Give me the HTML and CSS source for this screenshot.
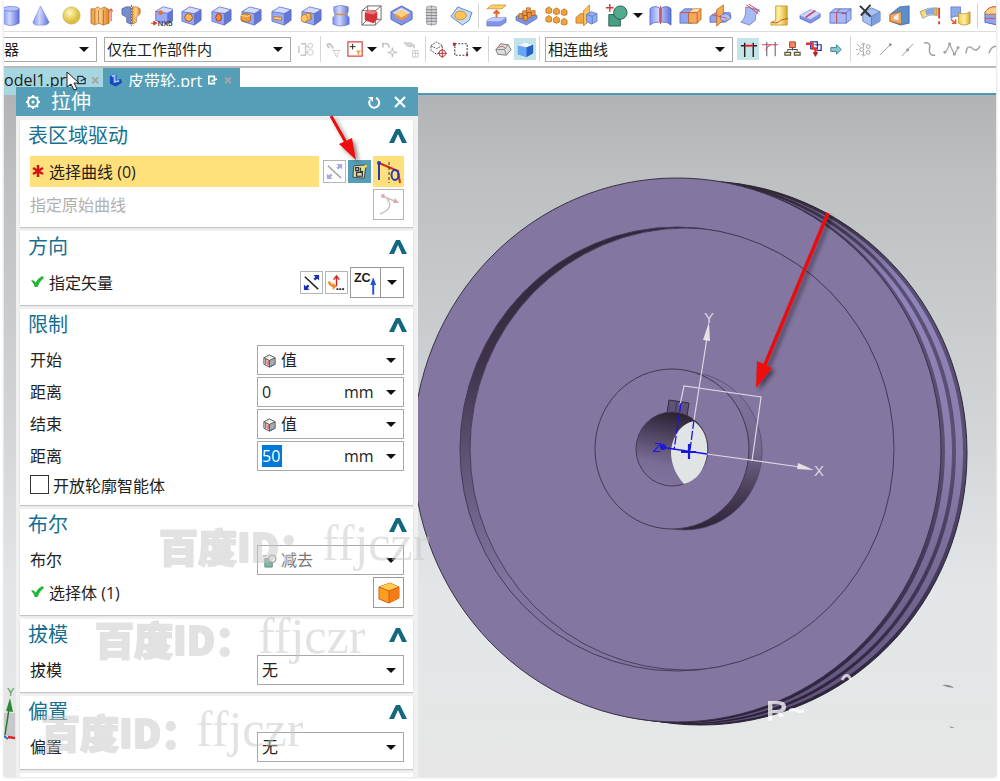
FILE: index.html
```html
<!DOCTYPE html>
<html lang="zh-CN">
<head>
<meta charset="utf-8">
<meta name="viewport" content="width=device-width, initial-scale=1">
<title>皮带轮.prt</title>
<link rel="stylesheet" href="styles.css">
</head>
<body>
<svg class="defs" aria-hidden="true">
  <defs>
    <linearGradient id="gb"><stop offset="0" stop-color="#7f92ee"/><stop offset=".4" stop-color="#cdd7ff"/><stop offset="1" stop-color="#5a6fd8"/></linearGradient>
    <linearGradient id="go"><stop offset="0" stop-color="#f09a38"/><stop offset=".45" stop-color="#ffd596"/><stop offset="1" stop-color="#dd7f1e"/></linearGradient>
    <linearGradient id="gy"><stop offset="0" stop-color="#f3cf4a"/><stop offset=".5" stop-color="#fff0a0"/><stop offset="1" stop-color="#d9a926"/></linearGradient>
    <radialGradient id="gs" cx=".4" cy=".35"><stop offset="0" stop-color="#fffac0"/><stop offset="1" stop-color="#dcc040"/></radialGradient>
    <symbol id="cube" viewBox="0 0 24 24">
      <path d="M2 8L10 3 22 6 15 10z" fill="#d3dcff"/><path d="M2 8L15 10V22L2 18z" fill="#98aaf5"/><path d="M15 10L22 6V17L15 22z" fill="#6377d4"/>
      <path d="M2 8L10 3 22 6V17L15 22 2 18zM2 8L15 10 22 6M15 10V22" fill="none" stroke="#5567c0" stroke-width=".8"/>
    </symbol>
    <symbol id="limit" viewBox="0 0 16 16">
      <path d="M2 5L8 2 14 5 8 8z" fill="#eee"/><path d="M2 5L8 8V15L2 12z" fill="#e5dada"/><path d="M8 8L14 5V12L8 15z" fill="#a9a9ad"/>
      <path d="M2 5L8 2 14 5V12L8 15 2 12zM2 5L8 8 14 5M8 8V15" fill="none" stroke="#555"/><path d="M4 6V12M6.500 8V13" stroke="#c22"/><path d="M8 15L14 12" stroke="#46a"/>
    </symbol>
    <symbol id="tick" viewBox="0 0 14 14"><path d="M0 6Q3 5 5 8 8 3 12 1L14 3Q9 7 7 13H4Q3 9 0 6z" fill="#22b835"/></symbol>
    <symbol id="chev" viewBox="0 0 18 14"><path d="M0 14L7 0H11L18 14H13L9 5 5 14z" fill="#12687f"/></symbol>
    <symbol id="flip" viewBox="0 0 20 20"><path d="M3 4L17 17" stroke="#222" stroke-width="1.600"/><path d="M7 13L4 16M13 7L16 4" stroke="#1a2fc0" stroke-width="2.500"/><path d="M2 18V12L8 18zM18 2V8L12 2z" fill="#1a2fc0"/></symbol>
  </defs>
</svg>

<div class="app">
  <nav class="bar features" aria-label="特征">
    <button aria-label="圆柱"><svg viewBox="0 0 24 24"><path d="M3 5V20Q11 25 20 20V5z" fill="url(#gb)" stroke="#5969c0" stroke-width=".6"/><ellipse cx="11.500" cy="5" rx="8.500" ry="2.500" fill="#b4c2ff" stroke="#5969c0" stroke-width=".6"/></svg></button>
    <button aria-label="圆锥"><svg viewBox="0 0 24 24"><path d="M11 2L20 19Q18 23 11 22 4 23 3 19z" fill="url(#gb)" stroke="#6675cc" stroke-width=".5"/></svg></button>
    <button aria-label="球"><svg viewBox="0 0 24 24"><circle cx="12" cy="12" r="9" fill="url(#gs)" stroke="#c0a850" stroke-width=".6"/></svg></button>
    <button aria-label="拉伸"><svg viewBox="0 0 24 24"><path d="M1 5H5L8 3 11 5 15 3 20 6V20L14 22 9 20 5 22 1 20z" fill="url(#go)" stroke="#a5651c" stroke-width=".7"/><path d="M5 6V21M9 6V20M14 6V22" stroke="#a5651c" stroke-width=".8"/><path d="M22 18V6M20 8L22 5 24 8" fill="none" stroke="#d32"/></svg></button>
    <button aria-label="旋转"><svg viewBox="0 0 24 24"><path d="M2 5Q6 2 11 3V21L7 19V14L2 11z" fill="#758dca" stroke="#4b5b96" stroke-width=".7"/><path d="M13 3Q18 2 21 5V10L17 14V19L13 21z" fill="url(#go)" stroke="#a5651c" stroke-width=".7"/><path d="M12 1V23" stroke="#654" stroke-dasharray="2 1"/></svg></button>
    <button aria-label="NX5"><svg viewBox="0 0 24 24"><svg x="4" y="0" width="16" height="16"><use href="#cube"/><circle cx="7" cy="9" r="2.500" fill="#dc7434"/></svg><path d="M1 20H5M4 18L7 20 4 22z" stroke="#d32" fill="#d32"/><text x="8" y="23" class="nx">NX5</text></svg></button>
    <button aria-label="孔"><svg viewBox="0 0 24 24"><use href="#cube"/><circle cx="9" cy="14" r="4" fill="#ffb45c" stroke="#a85218"/></svg></button>
    <button aria-label="凸台"><svg viewBox="0 0 24 24"><use href="#cube"/><ellipse cx="9" cy="14" rx="3" ry="4" fill="#ef8b35" stroke="#a33"/></svg></button>
    <button aria-label="垫块"><svg viewBox="0 0 24 24"><use href="#cube"/><path d="M1 12L4 10 11 11V17L8 19 1 17z" fill="#f09c3b" stroke="#a65f1d" stroke-width=".8"/><path d="M1 12L8 13 11 11" stroke="#ffe0a0" fill="none"/></svg></button>
    <button aria-label="腔体"><svg viewBox="0 0 24 24"><use href="#cube"/><path d="M4 13L12 14V17L4 16z" fill="#ffd28c" stroke="#c2702e"/></svg></button>
    <button aria-label="凸起"><svg viewBox="0 0 24 24"><use href="#cube"/><path d="M4 11L11 9 12 16 5 19z" fill="url(#go)" stroke="#a65f1d" stroke-width=".6"/><ellipse cx="4.500" cy="15" rx="3.500" ry="4" fill="#ffc567" stroke="#a65f1d" stroke-width=".6"/></svg></button>
    <button aria-label="槽"><svg viewBox="0 0 24 24"><path d="M4 3Q11 0 19 3V8L18 10V12L20 14V21Q11 25 3 21V14L5 12V10L4 8z" fill="url(#gb)" stroke="#5568bb" stroke-width=".6"/><path d="M5 10Q12 12 18 10" fill="none" stroke="#db9138" stroke-width="1.500"/></svg></button>
    <button aria-label="包容体"><svg viewBox="0 0 24 24"><path d="M2 7L8 2H22V16L16 22H2zM2 7H16L22 2M16 7V22M8 2V16H22M8 16L2 22" fill="none" stroke="#654f55" stroke-width=".9"/><path d="M5 9L9 6 18 8V16L14 20 5 17z" fill="#d4333c"/><path d="M5 9L9 6 18 8 14 11z" fill="#ee7978"/></svg></button>
    <button aria-label="抽壳"><svg viewBox="0 0 24 24"><path d="M12 2L23 8V16L12 22 1 16V8z" fill="#8295e2" stroke="#5166c5"/><path d="M12 4L21 9 12 14 3 9z" fill="#dfe7ff"/><path d="M5 10L12 6 19 10V13L12 17 5 13z" fill="#f1933d"/><path d="M5 10L12 6 19 10 12 14z" fill="#ffd27e"/></svg></button>
    <button aria-label="螺纹"><svg viewBox="0 0 24 24"><path d="M7 3Q12 1 17 3V21Q12 23 7 21z" fill="#d0d4d8" stroke="#888" stroke-width=".7"/><path d="M6 6H18M6 9H18M6 12H18M6 15H18M6 18H18" stroke="#888"/><path d="M12 2V22" stroke="#a77" stroke-dasharray="2 1"/></svg></button>
    <button aria-label="加厚"><svg viewBox="0 0 24 24"><path d="M1 13L8 3 23 9 20 17 13 22z" fill="#c4dcf5" stroke="#5d82cb"/><ellipse cx="11" cy="12" rx="6" ry="4.500" fill="#ffc455" stroke="#d28a20"/></svg></button>
    <i class="sep"></i>
    <button aria-label="凸垫"><svg viewBox="0 0 24 24"><path d="M2 5L7 1H22L18 5z" fill="#ffd06a" stroke="#bd8325" stroke-width=".7"/><path d="M12 16V8M9 10L12 7 15 10" stroke="#e0682c" stroke-width="2" fill="none"/><path d="M2 17L8 14H22V19L16 23H2z" fill="#8194ea" stroke="#5267bd" stroke-width=".6"/><path d="M2 17L8 14H22L16 18H2z" fill="#c3ceff"/></svg></button>
    <button aria-label="阵列特征"><svg viewBox="0 0 24 24"><path d="M1 13L12 7 23 12V15L12 22 1 17z" fill="#7d91e0" stroke="#5267bd" stroke-width=".6"/><g fill="#ef9a3c" stroke="#a85c1e" stroke-width=".7"><path d="M4 10h4v5h-4zM8 7h4v5h-4zM12 4h4v5h-4zM9 12h4v5h-4zM13 9h4v5h-4zM17 7h4v5h-4z"/></g></svg></button>
    <button aria-label="阵列几何"><svg viewBox="0 0 24 24"><g fill="#f3a13e" stroke="#b66b20" stroke-width=".8"><path d="M1 5l3-2 3 2v4l-3 1-3-1zM9 6l3-2 3 2v4l-3 1-3-1zM17 7l3-2 3 2v4l-3 1-3-1zM1 14l3-2 3 2v4l-3 1-3-1zM9 15l3-2 3 2v4l-3 1-3-1zM17 17l3-2 3 2v4l-3 1-3-1z"/></g></svg></button>
    <button aria-label="镜像"><svg viewBox="0 0 24 24"><path d="M1 14L6 10H12V20H1z" fill="#f6a641" stroke="#ad6a1c" stroke-width=".7"/><path d="M9 7L15 1V17L9 23z" fill="#ffc45e" stroke="#ad6a1c" stroke-width=".7"/><path d="M12 11L17 8 23 10V18L17 21 12 18z" fill="#8fadf0" stroke="#5267bd" stroke-width=".7"/><path d="M12 11L18 13 23 10M18 13V21" fill="none" stroke="#5267bd" stroke-width=".7"/></svg></button>
    <button aria-label="合并"><svg viewBox="0 0 24 24"><path d="M4 11H16V23H4z" fill="#489d83" stroke="#27624e"/><circle cx="16" cy="9" r="7" fill="#54aa8f" stroke="#27624e"/><path d="M5 0V8M1 4H9" stroke="#d63a35" stroke-width="1.500"/></svg></button>
    <button class="drop" aria-label="更多"></button>
    <button aria-label="分割"><svg viewBox="0 0 24 24"><path d="M1 5Q5 1 11 4V19Q5 18 1 22zM13 4Q19 1 23 5V22Q19 18 13 19z" fill="url(#gb)" stroke="#5267bd" stroke-width=".8"/><path d="M12 2V21" stroke="#d34c5a"/></svg></button>
    <button aria-label="修剪体"><svg viewBox="0 0 24 24"><path d="M1 9L6 5H14V20H1z" fill="#91a4f2" stroke="#5267bd" stroke-width=".8"/><path d="M10 9L15 5H23V16L19 20H10z" fill="#f7a859" stroke="#a65f1d" stroke-width=".8"/><path d="M10 9L15 5H23L19 9z" fill="#ffdca0"/><path d="M1 9H19L23 5M19 9V20" stroke="#c54" fill="none"/></svg></button>
    <button aria-label="拆分体"><svg viewBox="0 0 24 24"><path d="M1 13L7 9H22L23 14 17 19H1z" fill="#91a4ee" stroke="#5267bd" stroke-width=".8"/><path d="M8 6L15 1V17L8 23z" fill="#f8aa52" stroke="#b7601f" stroke-width=".8"/><path d="M12 12L17 10 22 12V16L16 18 12 16z" fill="#b3c2fa" stroke="#5267bd" stroke-width=".7"/><path d="M3 11L19 15" stroke="#cf584b"/></svg></button>
    <button aria-label="修剪片体"><svg viewBox="0 0 24 24"><path d="M7 3L21 6Q16 11 17 17L11 22 2 19Q8 14 7 3z" fill="#a7bbf2" stroke="#6578c5" stroke-width=".8"/><path d="M8 1L20 10M10 0L22 8" stroke="#d33c43"/></svg></button>
    <button aria-label="倒圆"><svg viewBox="0 0 24 24"><path d="M7 2H19V22H2V19L7 17z" fill="url(#gy)" stroke="#b89026" stroke-width=".8"/><path d="M3 19Q9 21 12 17L20 15" fill="none" stroke="#c94a2d"/></svg></button>
    <button aria-label="偏置面"><svg viewBox="0 0 24 24"><path d="M1 12L12 6 22 10V14L12 20 1 15z" fill="#8195e9" stroke="#5267bd" stroke-width=".8"/><path d="M1 12L12 6 22 10 12 16z" fill="#c9d4ff"/><path d="M7 14L17 7" stroke="#d33c43" stroke-width="1.500"/></svg></button>
    <button aria-label="替换面"><svg viewBox="0 0 24 24"><path d="M1 9L6 5H23V16L18 20H1z" fill="#a8b7f6" stroke="#5267bd" stroke-width=".8"/><path d="M1 9H18L23 5M18 9V20" fill="none" stroke="#5267bd" stroke-width=".8"/><path d="M12 5L8 9V20M13 10H18" stroke="#d33c43" fill="none"/></svg></button>
    <button aria-label="删除面"><svg viewBox="0 0 24 24"><path d="M4 9L13 4 22 8V18L13 23 4 18z" fill="#a6c2f2" stroke="#5471be" stroke-width=".8"/><path d="M13 13L22 8V18L13 23z" fill="#7f9ede"/><path d="M4 9L13 13 22 8M13 13V23" fill="none" stroke="#5471be" stroke-width=".8"/><path d="M1 2L12 13M12 1L2 12" stroke="#333" stroke-width="2"/></svg></button>
    <button aria-label="移动面"><svg viewBox="0 0 24 24"><path d="M1 11L11 3 21 2V20L12 22 1 18z" fill="#5d8dca" stroke="#3d609c" stroke-width=".8"/><path d="M1 11L13 8V21L1 18z" fill="#f2aa59" stroke="#a96b34" stroke-width=".8"/><path d="M5 13L10 10V17L5 16z" fill="#e8edf8"/></svg></button>
    <button aria-label="检查"><svg viewBox="0 0 24 24"><path d="M1 8Q9 3 19 4V12Q11 10 4 15z" fill="url(#gy)" stroke="#8286a5" stroke-width=".7"/><path d="M6 7Q13 4 16 4V11Q12 10 8 12z" fill="#87a8ec"/><path d="M21 4V15M21 18V21" stroke="#d74632" stroke-width="2"/></svg></button>
    <button aria-label="缝合"><svg viewBox="0 0 24 24"><path d="M2 3H12V14Q7 11 2 15z" fill="#8baaee" stroke="#5267bd" stroke-width=".7"/><path d="M10 9Q16 12 22 8V20Q16 24 10 20z" fill="url(#gy)" stroke="#b68028" stroke-width=".7"/><path d="M2 16L7 20M3 20H7V16" stroke="#e35f32" stroke-width="1.500" fill="none"/></svg></button>
    <i class="sep"></i>
    <button aria-label="实体"><svg viewBox="0 0 24 24"><path d="M1 9Q5 2 13 3L24 5V20L14 22 1 19z" fill="#8da6ec" stroke="#5267bd"/><path d="M1 9Q5 2 13 3L24 5V10L3 11z" fill="#ffd18a" stroke="#d4672e"/><path d="M1 15H22" stroke="#e04b39"/></svg></button>
  </nav>

  <div class="bar selection">
    <label class="pick pick-type"><select aria-label="类型过滤器"><option>器</option></select></label>
    <label class="pick pick-scope"><select aria-label="选择范围"><option>仅在工作部件内</option></select></label>
    <button class="faint" aria-label="装配"><svg viewBox="0 0 20 20"><path d="M4 4H9V16H4M2 6V14M9 7H12M9 13H12" fill="none" stroke="#777" stroke-width="1.500"/><circle cx="14" cy="6" r="2.500" fill="none" stroke="#777"/><circle cx="14" cy="13" r="3" fill="none" stroke="#777"/></svg></button>
    <i class="sep"></i>
    <button class="faint" aria-label="重置过滤器"><svg viewBox="0 0 20 20"><path d="M3 6Q5 2 8 6L10 9M3 6L6 8" stroke="#777" stroke-width="2" fill="none"/><path d="M9 11H17L14 14V18L12 16V14z" fill="none" stroke="#777"/></svg></button>
    <button aria-label="捕捉"><svg viewBox="0 0 20 20"><path d="M2 2H17V17H2z" fill="none" stroke="#dc4848" stroke-width="1.300"/><path d="M7 4V10M4 7H10" stroke="#222"/><path d="M10 11H16L14 13V16L12 15V13z" fill="#f2a238"/></svg></button>
    <button class="drop" aria-label="更多"></button>
    <button class="faint" aria-label="撤消选择"><svg viewBox="0 0 20 20"><path d="M3 8V3M3 5Q8 1 10 8M13 8V18M8 13H18" fill="none" stroke="#555" stroke-width="1.500"/><circle cx="13" cy="13" r="2" fill="#fff" stroke="#555"/></svg></button>
    <button class="faint" aria-label="全选"><svg viewBox="0 0 20 20"><path d="M2 3H10V7H6zM9 5H13V9" stroke="#777" fill="#999"/><path d="M11 11H17V18H11zM11 14H17M14 11V18" stroke="#777" fill="none"/></svg></button>
    <i class="sep"></i>
    <button aria-label="定向视图"><svg viewBox="0 0 20 20"><path d="M2 6L8 2 14 6V11L8 15 2 11zM2 6L8 9 14 6" fill="none" stroke="#555" stroke-dasharray="2 1"/><circle cx="14" cy="14" r="3.500" fill="#fff" stroke="#a33"/><path d="M14 9V19M9 14H19" stroke="#a33"/></svg></button>
    <button aria-label="矩形选择"><svg viewBox="0 0 20 20"><path d="M4 4H17V16H4z" fill="none" stroke="#444" stroke-dasharray="2 1.500" stroke-width="1.200"/><path d="M2 3H5V6H2zM16 14H18V17H16z" fill="#b62b39"/></svg></button>
    <button class="drop" aria-label="更多"></button>
    <i class="sep sep-wide"></i>
    <button aria-label="面"><svg viewBox="0 0 20 20"><path d="M2 10L7 4 15 5 18 10 13 16 4 15z" fill="#ddd" stroke="#777"/><path d="M2 10L11 10 13 16M11 10L15 5" stroke="#888" fill="none"/><path d="M5 8Q9 5 12 9" stroke="#c55" fill="none"/></svg></button>
    <button class="on" aria-label="着色"><svg viewBox="0 0 20 20"><path d="M2 6L9 2 18 5V14L11 18 2 15z" fill="#3e7fe0"/><path d="M2 6L9 2 18 5 11 8z" fill="#f1f7ff"/><path d="M11 8L18 5V14L11 18z" fill="#2763c4"/><path d="M2 6L11 8V18L2 15z" fill="#68a6fa"/></svg></button>
    <i class="sep"></i>
    <label class="pick pick-curve"><select aria-label="曲线规则"><option>相连曲线</option></select></label>
    <button class="on lead" aria-label="在相交处停止"><svg viewBox="0 0 20 20"><path d="M6 3V18M15 3V18M2 6H6M15 6H19" stroke="#222" stroke-width="1.500"/><path d="M6 6H15" stroke="#e02020" stroke-width="2"/></svg></button>
    <button aria-label="跟随圆角"><svg viewBox="0 0 20 20"><path d="M6 2V17M15 2V17" stroke="#8888a0" stroke-width="1.500"/><path d="M1 5H10Q6 7 5 11M10 5H18" stroke="#c83b50" fill="none"/></svg></button>
    <button aria-label="特征曲线"><svg viewBox="0 0 20 20"><path d="M7 2H13V8H7z" fill="#f48a5c" stroke="#b33"/><path d="M10 8V11M5 12V10H15V12" stroke="#444" fill="none"/><path d="M2 13H8V16H2zM12 13H18V16H12z" fill="#fff5a6" stroke="#554" stroke-width="1.300"/></svg></button>
    <button aria-label="路径"><svg viewBox="0 0 20 20"><path d="M6 2H13V9H6zM10 5H17V11H12" fill="none" stroke="#2430b4" stroke-width="1.300"/><path d="M1 4H8V9H11V14" fill="none" stroke="#d33" stroke-width="2.500"/><path d="M8 13H14L11 18z" fill="#a22"/></svg></button>
    <button aria-label="下一个"><svg viewBox="0 0 20 20"><path d="M4 8H10V5L15 10 10 15V12H4z" fill="#8ec8cf" stroke="#3e7e92"/></svg></button>
    <i class="sep"></i>
    <button class="dim" aria-label="点集"><svg viewBox="0 0 20 20"><path d="M10 4V8M10 12V16M8 5L10 3 12 5M8 15L10 17 12 15M3 4L6 7M3 16L6 13M2 10H4" fill="none" stroke="#888"/><circle cx="15" cy="7" r="2" fill="none" stroke="#888"/><circle cx="15" cy="13" r="2" fill="none" stroke="#888"/><circle cx="8" cy="10" r="2" fill="none" stroke="#888"/></svg></button>
    <button class="dim" aria-label="端点"><svg viewBox="0 0 20 20"><path d="M4 16L15 5" stroke="#888"/><circle cx="15" cy="5" r="1.500" fill="#777"/></svg></button>
    <button class="dim" aria-label="中点"><svg viewBox="0 0 20 20"><path d="M4 17L16 4" stroke="#888"/><circle cx="10" cy="10.500" r="1.500" fill="#777"/></svg></button>
    <button class="dim" aria-label="控制点"><svg viewBox="0 0 20 20"><path d="M4 3Q12 2 10 9 9 17 16 16" fill="none" stroke="#888" stroke-width="1.500"/></svg></button>
    <button class="dim" aria-label="极点"><svg viewBox="0 0 20 20"><path d="M2 13Q5 13 8 4 10 9 13 15L17 8" fill="none" stroke="#888" stroke-width="1.200"/><g fill="#888"><circle cx="3" cy="13" r="1.500"/><circle cx="8" cy="4" r="1.500"/><circle cx="13" cy="15" r="1.500"/><circle cx="17" cy="8" r="1.500"/></g></svg></button>
    <button class="dim" aria-label="样条"><svg viewBox="0 0 20 20"><path d="M2 14Q3 5 8 8 13 14 17 6" fill="none" stroke="#888" stroke-width="1.500"/></svg></button>
    <button class="dim" aria-label="圆弧"><svg viewBox="0 0 20 20"><path d="M3 14Q6 5 14 7" fill="none" stroke="#888" stroke-width="1.500"/></svg></button>
  </div>

  <div class="tabs">
    <button class="tab tab-back"><span>odel1.prt</span><svg class="tab-icon" viewBox="0 0 12 12"><path d="M2 2H7L10 5V10H2zM5 7L11 4" fill="none" stroke="#234" stroke-width="1.300"/></svg><span class="x">×</span></button>
    <button class="tab tab-front"><svg class="part-icon" viewBox="0 0 16 16"><path d="M2 4L7 1 9 3V8L14 7 15 11 8 15 2 12z" fill="#1748c0"/><path d="M4 4L7 3V10L12 9" fill="none" stroke="#9cc4ff" stroke-width="2"/></svg><span>皮带轮.prt</span><svg class="tab-icon" viewBox="0 0 12 12"><path d="M8 5V2H2V10H8V8M5 7L11 5" fill="none" stroke="#fff" stroke-width="1.800"/></svg><span class="x">×</span></button>
  </div>

  <main class="workspace">
    <svg class="scene" viewBox="4 95 992 682" preserveAspectRatio="xMinYMin slice" role="img" aria-label="皮带轮模型">
      <defs>
        <linearGradient id="rimD" x1="0" y1="0" x2="0" y2="1"><stop offset="0" stop-color="#2c2530"/><stop offset=".2" stop-color="#5b4f76"/><stop offset=".5" stop-color="#5a4e72"/><stop offset=".8" stop-color="#3a3050"/><stop offset="1" stop-color="#282035"/></linearGradient>
        <linearGradient id="rimL" x1="0" y1="0" x2="0" y2="1"><stop offset="0" stop-color="#5c5074"/><stop offset=".2" stop-color="#9085bb"/><stop offset=".5" stop-color="#8b7eac"/><stop offset="1" stop-color="#5d5078"/></linearGradient>
        <linearGradient id="recess" x1="0" y1="0" x2="0" y2="1"><stop offset="0" stop-color="#2f2638"/><stop offset=".3" stop-color="#3d3249"/><stop offset=".55" stop-color="#64577b"/><stop offset=".8" stop-color="#8074a0"/><stop offset="1" stop-color="#8376a1"/></linearGradient>
        <linearGradient id="boss" x1="0" y1="0" x2="0" y2="1"><stop offset="0" stop-color="#8376a1"/><stop offset=".5" stop-color="#74688f"/><stop offset=".75" stop-color="#4b3f5a"/><stop offset="1" stop-color="#2c2335"/></linearGradient>
        <linearGradient id="bore" x1=".5" y1="0" x2=".3" y2="1"><stop offset="0" stop-color="#2b2330"/><stop offset=".2" stop-color="#413650"/><stop offset=".7" stop-color="#796c95"/><stop offset="1" stop-color="#8074a0"/></linearGradient>
        <clipPath id="pocket"><ellipse cx="677" cy="449" rx="217" ry="222"/></clipPath>
        <clipPath id="markTop"><path d="M760 695H815V708L804 714 785 716 770 721H760z"/></clipPath>
        <filter id="soft" x="-50%" y="-50%" width="200%" height="200%"><feDropShadow dx="3" dy="3" stdDeviation="2" flood-opacity=".45"/></filter>
      </defs>
      <ellipse cx="701" cy="453" rx="266" ry="272" fill="url(#rimD)" stroke="#2c2535"/>
      <ellipse cx="697" cy="453" rx="266" ry="271" fill="url(#rimL)"/>
      <ellipse cx="691" cy="452" rx="265" ry="272" fill="url(#rimD)"/>
      <ellipse cx="687" cy="452" rx="265" ry="271" fill="url(#rimL)"/>
      <ellipse cx="681" cy="451" rx="264" ry="272" fill="url(#rimD)"/>
      <ellipse cx="677" cy="450" rx="264" ry="272" fill="#8376a1" stroke="#3b3149"/>
      <ellipse cx="677" cy="449" rx="217" ry="222" fill="url(#recess)"/>
      <ellipse cx="686" cy="449" rx="216" ry="221" fill="#8376a1" stroke="#4a3e5c" clip-path="url(#pocket)"/>
      <ellipse cx="677" cy="449" rx="217" ry="222" fill="none" stroke="#453a58"/>
      <ellipse cx="685" cy="451" rx="77" ry="79" fill="url(#boss)" stroke="#52466a" stroke-width=".7"/>
      <ellipse cx="672" cy="449" rx="77" ry="80" fill="#8376a1" stroke="#43384f"/>
      <path d="M669 400L689 403 687 416 667 413z" fill="#5e5279" stroke="#362c41"/>
      <path d="M677 401L675 414" stroke="#443855"/>
      <ellipse cx="672" cy="449" rx="36" ry="37" fill="url(#bore)" stroke="#473b58"/>
      <path d="M694 421C705 430 708 440 707 454 705 470 696 481 684 484 675 474 671 463 671 452 672 437 680 424 694 421z" fill="#e0e4e5"/>
      <g fill="none" stroke="#ddd6e2" stroke-width="1.200"><path d="M694 420L707 338M707 454L800 467M680 405L684 386 761 397 752 461"/></g>
      <path d="M709 322L703 340 710 341zM814 470L798 463 797 469z" fill="#e6e1e4"/>
      <g class="axis"><text x="704" y="323">Y</text><text x="814" y="476">X</text></g>
      <text x="653" y="452" class="axis-z">Z</text>
      <g stroke="#1a16e0" fill="none"><path d="M660 447L707 454" stroke-width="1.500"/><path d="M694 420L690 450M681 403L674 450" stroke-dasharray="9 2" stroke-width="1.300"/><path d="M681 452H696M689 444V459" stroke-width="2.200"/></g>
      <circle cx="663" cy="447" r="3" fill="#1a16e0"/>
      <g filter="url(#soft)"><path d="M828 213L764 367" stroke="#ea0c0c" stroke-width="3.500"/><path d="M756 388L757 361 772 368z" fill="#f00c0c"/></g>
      <text x="766" y="721" class="stray" clip-path="url(#markTop)">R~</text>
      <path d="M842 680Q847 671 851 680" fill="none" stroke="#fff" stroke-width="3" opacity=".7"/>
      <path d="M942 685Q950 684 954 688 948 688 942 685zM949 726L955 728H951z" fill="#8a8f92"/>
      <path d="M4 713H15V736H4z" fill="#c8c8ca"/>
      <path d="M5 735L9 709" stroke="#287a30" stroke-width="1.500"/><path d="M10 698L6 711 13 712z" fill="#2b8a33"/><path d="M4 736L8 739" stroke="#36c" stroke-width="2"/><path d="M8 737L15 738" stroke="#d22" stroke-width="2.500"/>
      <text x="7" y="696" class="triad">Y</text>
    </svg>

    <form class="dialog" aria-label="拉伸">
      <header class="dialog-head">
        <svg class="gear" viewBox="0 0 16 16"><circle cx="8" cy="8" r="5" fill="none" stroke="#fff" stroke-width="2"/><circle cx="8" cy="8" r="1.500" fill="#fff"/><path d="M8 1V3M8 13V15M1 8H3M13 8H15M3 3L4.500 4.500M11.500 11.500L13 13M13 3L11.500 4.500M3 13L4.500 11.500" stroke="#fff" stroke-width="2"/></svg>
        <h1>拉伸</h1>
        <button type="button" aria-label="重置"><svg viewBox="0 0 16 16"><path d="M10 4A5 5 0 1 1 4 6" fill="none" stroke="#fff" stroke-width="2"/><path d="M2 3H7V8z" fill="#fff"/></svg></button>
        <button type="button" aria-label="关闭"><svg viewBox="0 0 16 16"><path d="M3 3L13 13M13 3L3 13" stroke="#fff" stroke-width="2.200"/></svg></button>
      </header>
      <div class="cards">
        <section class="card">
          <h2>表区域驱动<svg><use href="#chev"/></svg></h2>
          <div class="row tall tight">
            <div class="active"><svg viewBox="0 0 12 12"><path d="M6 0V12M1 3L11 9M11 3L1 9" stroke="#d31212" stroke-width="2.500"/></svg><span>选择曲线 (0)</span></div>
            <button type="button" class="sq off" aria-label="反向"><svg viewBox="0 0 20 20"><use href="#flip"/></svg></button>
            <button type="button" class="sq sketch" aria-label="绘制截面"><svg viewBox="0 0 20 20"><path d="M4 4L17 3 15 17 3 16z" fill="#d8d9a6" stroke="#444"/><path d="M6 6H9V9H6zM7 11H13V15H7zM11 6V10H14" fill="none" stroke="#333" stroke-width="1.300"/><path d="M11 9L17 2 18 5z" fill="#f2e438"/></svg></button>
            <button type="button" class="sq big gold" aria-label="曲线"><svg viewBox="0 0 28 28"><path d="M4 5V22" stroke="#263cb4" stroke-width="2"/><path d="M4 5L23 13 25 25" stroke="#d32a24" stroke-width="2" fill="none"/><path d="M14 4V25" stroke="#333" stroke-dasharray="3 2"/><ellipse cx="20" cy="17" rx="3.500" ry="5" fill="none" stroke="#263cb4" stroke-width="2"/><circle cx="4" cy="5" r="2" fill="#263cb4"/></svg></button>
          </div>
          <div class="row tall"><span class="mute">指定原始曲线</span><button type="button" class="sq big off" aria-label="原始曲线"><svg viewBox="0 0 28 28"><path d="M7 5L22 11M12 8Q20 17 5 23" fill="none" stroke="#765" stroke-width="1.500"/><circle cx="8" cy="5" r="2" fill="#a34"/><path d="M24 12L18 12 20 7z" fill="#a34"/></svg></button></div>
        </section>

        <section class="card">
          <h2>方向<svg><use href="#chev"/></svg></h2>
          <div class="row tall tight">
            <span class="ok"><svg><use href="#tick"/></svg>指定矢量</span>
            <button type="button" class="sq" aria-label="反向"><svg viewBox="0 0 20 20"><use href="#flip"/></svg></button>
            <button type="button" class="sq" aria-label="矢量对话框"><svg viewBox="0 0 20 20"><path d="M10 14V4M7 7L10 3 13 7" fill="none" stroke="#c22" stroke-width="1.500"/><path d="M2 9Q3 13 7 14" fill="none" stroke="#f18a24" stroke-width="2.500"/><path d="M6 10V18L10 14z" fill="#f18a24"/><path d="M10 17H12M13 17H15M16 17H18" stroke="#222" stroke-width="2"/></svg></button>
            <span class="split"><button type="button" class="zc" aria-label="ZC 轴"><svg viewBox="0 0 30 28"><text x="3" y="13">ZC</text><path d="M23 26V13" stroke="#1d52dc" stroke-width="2"/><path d="M20 16L23 8 26 16z" fill="#1d52dc"/></svg></button><button type="button" class="drop" aria-label="更多"></button></span>
          </div>
        </section>

        <section class="card">
          <h2>限制<svg><use href="#chev"/></svg></h2>
          <div class="row"><label for="start">开始</label><span class="pick field with-icon"><svg><use href="#limit"/></svg><select id="start"><option>值</option></select></span></div>
          <div class="row"><label for="d1">距离</label><span class="field measure"><input id="d1" value="0"><span class="pick unit"><select aria-label="单位"><option>mm</option></select></span></span></div>
          <div class="row"><label for="end">结束</label><span class="pick field with-icon"><svg><use href="#limit"/></svg><select id="end"><option>值</option></select></span></div>
          <div class="row"><label for="d2">距离</label><span class="field measure"><input id="d2" class="picked" value="50"><span class="pick unit"><select aria-label="单位"><option>mm</option></select></span></span></div>
          <div class="row short"><label class="check"><input type="checkbox">开放轮廓智能体</label></div>
        </section>

        <section class="card">
          <h2>布尔<svg><use href="#chev"/></svg></h2>
          <div class="row"><label for="bool">布尔</label><span class="pick field with-icon gray"><svg viewBox="0 0 16 16"><path d="M3 6H11V15H3z" fill="#82b5a2" stroke="#698f81"/><circle cx="11" cy="6" r="4" fill="#eee" stroke="#888"/><path d="M1 3H5" stroke="#888"/></svg><select id="bool"><option>减去</option></select></span></div>
          <div class="row tall"><span class="ok"><svg><use href="#tick"/></svg>选择体 (1)</span><button type="button" class="sq big dark" aria-label="选择体"><svg viewBox="0 0 28 28"><path d="M4 8L15 4 24 8V19L14 24 4 20z" fill="#ff9d20" stroke="#cf5f18"/><path d="M4 8L15 4 24 8 14 12z" fill="#ffcd4b"/><path d="M14 12L24 8V19L14 24z" fill="#f47c16"/><path d="M4 8L14 12 24 8M14 12V24" fill="none" stroke="#ce5a16"/></svg></button></div>
        </section>

        <section class="card">
          <h2>拔模<svg><use href="#chev"/></svg></h2>
          <div class="row"><label for="draft">拔模</label><span class="pick field"><select id="draft"><option>无</option></select></span></div>
        </section>

        <section class="card">
          <h2>偏置<svg><use href="#chev"/></svg></h2>
          <div class="row"><label for="offset">偏置</label><span class="pick field"><select id="offset"><option>无</option></select></span></div>
        </section>
        <div class="card rest"></div>
      </div>
    </form>
  </main>
</div>

<svg class="overlay" aria-hidden="true">
  <g class="mark"><text x="159" y="562" class="heavy">百度ID：</text><text x="322" y="560" class="thin">ffjczr</text></g>
  <g class="mark"><text x="95" y="655" class="heavy">百度ID：</text><text x="258" y="653" class="thin">ffjczr</text></g>
  <g class="mark"><text x="41" y="748" class="heavy">百度ID：</text><text x="196" y="746" class="thin">ffjczr</text></g>
  <g filter="url(#soft)"><path d="M331 116L348 146" stroke="#ea0c0c" stroke-width="3"/><path d="M356 160L339 144 352 138z" fill="#f00c0c"/></g>
  <path d="M67 72V87L71 84 74 90 77 89 74 83H79z" fill="#fff" stroke="#222"/>
</svg>
</body>
</html>
```
FILE: styles.css
```css
* { box-sizing: border-box; }
body {
  margin: 0;
  padding: 0 4px 4px;
  min-height: 100vh;
  display: flex;
  position: relative;
  background: #fff;
  color: #222;
  font: 16px "Open Sans", "Noto Sans CJK SC", sans-serif;
}
button, input, select { font: inherit; color: inherit; }
button { border: 0; padding: 0; background: none; }
svg { display: block; }
.defs { position: absolute; width: 0; height: 0; }

.app {
  flex: 1;
  min-width: 0;
  display: flex;
  flex-direction: column;
  overflow: hidden;
  background: #fff;
  box-shadow: 0 0 3px #ccc;
}
.bar { display: flex; align-items: center; flex: none; }
.bar > * { flex: none; }
.features { height: 32px; margin-left: -8px; border-bottom: 1px solid #ddd; }
.features button { width: 30px; height: 30px; display: grid; place-items: center; }
.features svg { width: 23px; height: 23px; }
.features button.drop { width: 14px; }
.nx { font: bold 8px "Liberation Sans", sans-serif; fill: #445; }
.sep { width: 1px; height: 26px; margin: 0 1px 0 3px; background: #d5d5d5; }
.sep-wide { margin: 0 3px 0 5px; }
.features .sep { margin: 0 2px; }
.drop::after, .pick::after {
  content: "";
  border: 5px solid transparent;
  border-top-color: #111;
  border-bottom: 0;
}
.selection { height: 36px; border-bottom: 2px solid #b9b9b9; font-size: 15px; }
.selection button { width: 22px; height: 22px; display: grid; place-items: center; }
.selection svg { width: 19px; height: 19px; }
.selection button.drop { width: 12px; }
.selection .on { background: #c4e4ea; }
.selection .lead { margin-left: 4px; }
.selection .faint { opacity: .4; }
.selection .dim { opacity: .8; }

.pick { display: grid; grid-template-columns: 1fr 24px; align-items: center; }
.pick select {
  grid-area: 1 / 1 / 2 / 3;
  appearance: none;
  width: 100%;
  height: 100%;
  padding: 0 24px 0 4px;
  border: 0;
  border-radius: 0;
  background: transparent;
}
.pick::after { grid-area: 1 / 2; justify-self: center; pointer-events: none; }
.bar .pick { height: 25px; border: 1px solid #aaa; }
.pick-type { width: 93px; }
.bar .pick-type { border-left: 0; }
.pick-scope { width: 187px; margin: 0 4px 0 7px; }
.bar .pick select { padding-left: 2px; }
.bar .pick-type select { padding-left: 0; }
.pick-curve { width: 188px; margin-left: 4px; }

.tabs { flex: none; display: flex; height: 27px; border-bottom: 2px solid #4b9ab3; }
.tab { display: flex; align-items: center; gap: 6px; height: 27px; padding-bottom: 4px; white-space: nowrap; }
.tab-back { width: 99px; background: #a6d6df; gap: 4px; }
.tab-front { width: 137px; padding-left: 5px; background: #549fb7; color: #fff; gap: 5px; }
.tab-icon { width: 11px; height: 12px; flex: none; }
.part-icon { width: 15px; height: 16px; flex: none; }
.tab .x { color: #a9a3a3; font-weight: bold; }

.workspace {
  flex: 1;
  position: relative;
  min-height: 682px;
  background: linear-gradient(#b1b4b6, #bdc0c1 12%, #d3d6d8 50%, #e2e6e8 72%, #e6e6e6);
}
.scene { position: absolute; inset: 0; width: 100%; height: 100%; }
.axis text { font: 15px "Liberation Sans", sans-serif; fill: #ddd6e2; }
.axis-z { font: italic 13px "Liberation Sans", sans-serif; fill: #1a16e0; }
.stray { font: bold 30px "Liberation Sans", sans-serif; fill: #fff; opacity: .75; }
.triad { font: 11px "Liberation Sans", sans-serif; fill: #4a9a50; }

.dialog {
  position: absolute;
  top: -8px;
  bottom: 0;
  left: 12px;
  width: 402px;
  display: flex;
  flex-direction: column;
  overflow: hidden;
  background: #f0f0f0;
}
.dialog-head {
  flex: none;
  display: flex;
  align-items: center;
  gap: 10px;
  height: 29px;
  padding: 0 10px 0 9px;
  background: #549fb7;
  color: #fff;
}
.dialog-head svg { width: 16px; height: 16px; }
.dialog-head h1 { flex: 1; margin: 0; font-size: 20px; line-height: 28px; font-weight: 400; }
.cards { flex: 1; display: flex; flex-direction: column; gap: 4px; padding: 4px 5px 0 4px; }
.card { padding: 0 9px 7px 10px; background: #fff; box-shadow: 0 1px 1px #c4c4c4; display: grid; gap: 2px; }
.card.rest { flex: 1; padding: 0; }
.card h2 {
  display: flex;
  align-items: center;
  justify-content: space-between;
  margin: 0 -3px 3px -2px;
  height: 31px;
  font-size: 20px;
  line-height: 31px;
  font-weight: 400;
  color: #17708f;
}
.card h2 svg { width: 18px; height: 14px; }
.row { display: flex; align-items: center; justify-content: space-between; height: 30px; }
.row.tall { height: 31px; }
.row.short { height: 25px; }
.row label, .ok, .mute, .active { padding-bottom: 2px; }
.tight { gap: 2px; }
.active {
  flex: 1;
  display: flex;
  align-items: center;
  gap: 5px;
  height: 31px;
  padding-left: 2px;
  margin-right: 2px;
  background: #ffe07a;
}
.active svg { width: 12px; height: 12px; }
.mute { color: #b0b0b0; }
.ok { flex: 1; display: flex; align-items: center; gap: 5px; padding-left: 1px; }
.ok svg { width: 13px; height: 13px; }
.sq { width: 23px; height: 23px; border: 1px solid #b5b5b5; display: grid; place-items: center; background: #fff; }
.sq svg { width: 19px; height: 19px; }
.sq.big { width: 31px; height: 31px; }
.sq.big svg { width: 28px; height: 28px; }
.off svg { opacity: .4; }
.sq.sketch { background: #549fb7; border-color: #549fb7; }
.sq.gold { background: #ffe07a; border-color: #ffe07a; }
.sq.dark { border-color: #999; }
.split { display: flex; width: 54px; height: 31px; border: 1px solid #999; }
.zc { width: 30px; border-right: 1px solid #999; }
.zc svg { width: 29px; height: 28px; }
.zc text { font: bold 13px "Liberation Sans", sans-serif; fill: #222; }
.split .drop { flex: 1; display: grid; place-items: center; }

.field { width: 147px; height: 30px; border: 1px solid #a8a8a8; background: #fff; }
.with-icon svg { grid-area: 1 / 1; width: 15px; height: 15px; margin-left: 4px; }
.with-icon select { padding-left: 23px; }
.gray { color: #777; }
.measure { display: flex; align-items: center; justify-content: space-between; }
.measure input { width: 60px; height: 22px; margin-left: 4px; padding: 0; border: 0; outline: 0; background: none; }
.measure .picked { width: 20px; background: #0078d7; color: #fff; }
.unit { width: 60px; height: 28px; }
.unit select { padding: 0 0 0 1px; }
.check { display: flex; align-items: center; gap: 4px; }
.check input { appearance: none; width: 19px; height: 19px; margin: 0; border: 1px solid #333; background: #fff; }

.overlay { position: absolute; top: 0; left: 0; width: 100%; height: 100%; pointer-events: none; }
.mark { fill: #c6c6c6; opacity: .5; }
.heavy { font: 900 39px "Noto Sans CJK SC", sans-serif; stroke: #c6c6c6; stroke-width: 2px; stroke-linejoin: round; }
.thin { font: 50px "Liberation Serif", serif; }
```
